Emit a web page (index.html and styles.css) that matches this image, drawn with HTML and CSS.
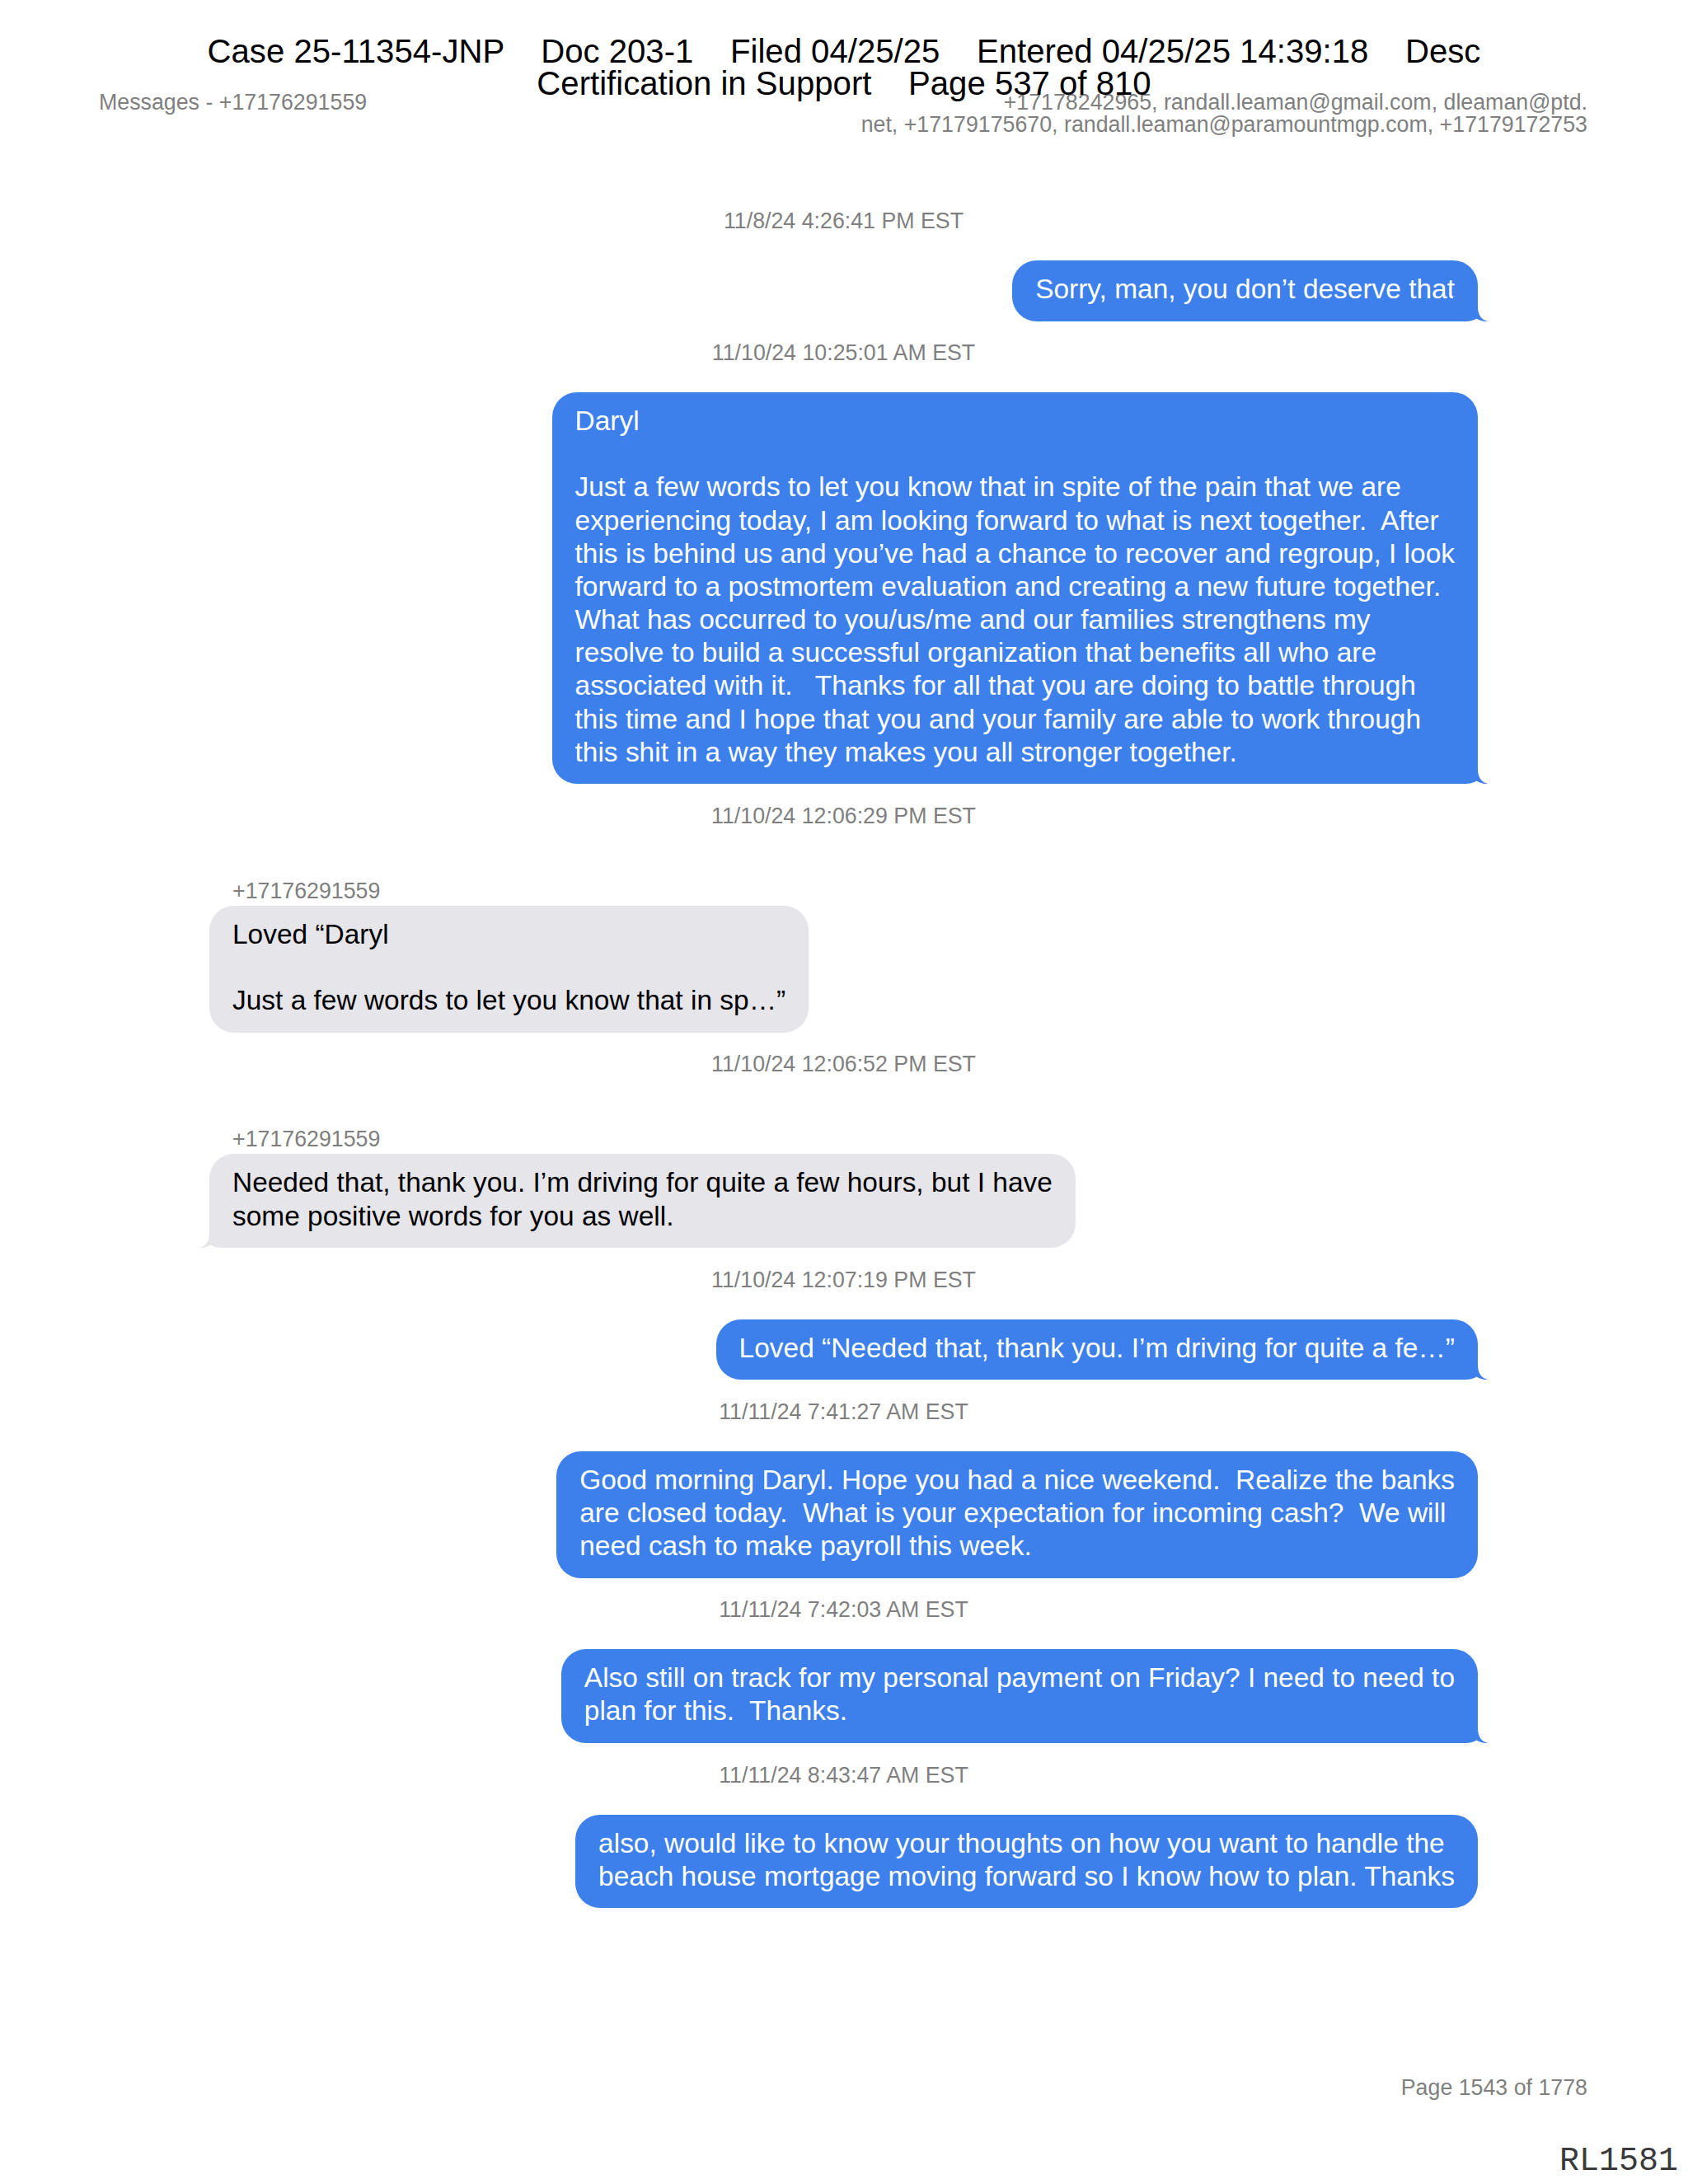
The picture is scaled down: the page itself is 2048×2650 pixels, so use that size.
FILE: index.html
```html
<!DOCTYPE html>
<html lang="en">
<head>
<meta charset="utf-8">
<title>Messages - +17176291559</title>
<link rel="stylesheet" href="styles.css">
</head>
<body>
<div class="page">
  <div class="stamp">Case 25-11354-JNP    Doc 203-1    Filed 04/25/25    Entered 04/25/25 14:39:18    Desc<br>Certification in Support    Page 537 of 810</div>

  <header class="doc-head">
    <div class="doc-title">Messages - +17176291559</div>
    <div class="doc-parts">+17178242965, randall.leaman@gmail.com, dleaman@ptd.<br>net, +17179175670, randall.leaman@paramountmgp.com, +17179172753</div>
  </header>

  <main class="thread">
    <div class="ts">11/8/24 4:26:41 PM EST</div>
    <div class="bubble out">Sorry, man, you don’t deserve that<svg class="tail" viewBox="0 0 42 34"><path d="M0,4 H30 V16 C30,26 34,32 42,34 C37,34.4 32,33 28.5,30.5 C25,33 20,34 14,34 H0 Z"/></svg></div>

    <div class="ts">11/10/24 10:25:01 AM EST</div>
    <div class="bubble out">Daryl<br><br>Just a few words to let you know that in spite of the pain that we are<br>experiencing today, I am looking forward to what is next together.  After<br>this is behind us and you’ve had a chance to recover and regroup, I look<br>forward to a postmortem evaluation and creating a new future together.<br>What has occurred to you/us/me and our families strengthens my<br>resolve to build a successful organization that benefits all who are<br>associated with it.   Thanks for all that you are doing to battle through<br>this time and I hope that you and your family are able to work through<br>this shit in a way they makes you all stronger together.<svg class="tail" viewBox="0 0 42 34"><path d="M0,4 H30 V16 C30,26 34,32 42,34 C37,34.4 32,33 28.5,30.5 C25,33 20,34 14,34 H0 Z"/></svg></div>

    <div class="ts">11/10/24 12:06:29 PM EST</div>
    <div class="sender">+17176291559</div>
    <div class="bubble in">Loved “Daryl<br><br>Just a few words to let you know that in sp…”</div>

    <div class="ts">11/10/24 12:06:52 PM EST</div>
    <div class="sender">+17176291559</div>
    <div class="bubble in">Needed that, thank you. I’m driving for quite a few hours, but I have<br>some positive words for you as well.<svg class="tail" viewBox="0 0 42 34"><path d="M0,4 H30 V16 C30,26 34,32 42,34 C37,34.4 32,33 28.5,30.5 C25,33 20,34 14,34 H0 Z"/></svg></div>

    <div class="ts">11/10/24 12:07:19 PM EST</div>
    <div class="bubble out">Loved “Needed that, thank you. I’m driving for quite a fe…”<svg class="tail" viewBox="0 0 42 34"><path d="M0,4 H30 V16 C30,26 34,32 42,34 C37,34.4 32,33 28.5,30.5 C25,33 20,34 14,34 H0 Z"/></svg></div>

    <div class="ts">11/11/24 7:41:27 AM EST</div>
    <div class="bubble out">Good morning Daryl. Hope you had a nice weekend.  Realize the banks<br>are closed today.  What is your expectation for incoming cash?  We will<br>need cash to make payroll this week.</div>

    <div class="ts">11/11/24 7:42:03 AM EST</div>
    <div class="bubble out">Also still on track for my personal payment on Friday? I need to need to<br>plan for this.  Thanks.<svg class="tail" viewBox="0 0 42 34"><path d="M0,4 H30 V16 C30,26 34,32 42,34 C37,34.4 32,33 28.5,30.5 C25,33 20,34 14,34 H0 Z"/></svg></div>

    <div class="ts">11/11/24 8:43:47 AM EST</div>
    <div class="bubble out">also, would like to know your thoughts on how you want to handle the<br>beach house mortgage moving forward so I know how to plan. Thanks</div>
  </main>

  <footer class="doc-foot">
    <div class="page-no">Page 1543 of 1778</div>
    <div class="bates">RL1581</div>
  </footer>
</div>
</body>
</html>
```

FILE: styles.css
```css
html, body {
  margin: 0;
  padding: 0;
  background: #ffffff;
}

body {
  font-family: "Liberation Sans", Arial, sans-serif;
}

.page {
  position: relative;
  width: 2048px;
  min-height: 2650px;
  box-sizing: border-box;
  padding: 111px 0 7px;
  display: flex;
  flex-direction: column;
}

/* court filing stamp laid over the page */
.stamp {
  position: absolute;
  top: 42.5px;
  left: 0;
  right: 0;
  text-align: center;
  font-size: 40.15px;
  line-height: 39.5px;
  color: #000000;
  white-space: pre;
}

.doc-head {
  display: flex;
  justify-content: space-between;
  align-items: flex-start;
  padding: 0 122px 0 120px;
  font-size: 26.77px;
  line-height: 27px;
  color: #7f7f7f;
}

.doc-parts {
  text-align: right;
}

.thread {
  display: flex;
  flex-direction: column;
  margin-top: 90px;
  padding: 0 255px 0 254px;
}

.ts {
  align-self: center;
  font-size: 26.77px;
  line-height: 27px;
  color: #7f7f7f;
  white-space: pre;
  margin: 25.5px 0 34px;
}

.ts:first-child {
  margin-top: 0;
}

.sender {
  align-self: flex-start;
  font-size: 26.77px;
  line-height: 27px;
  color: #7f7f7f;
  margin: 30px 0 4px 28px;
}

.bubble {
  position: relative;
  font-size: 33.46px;
  line-height: 40.15px;
  padding: 15px 28px 18.5px;
  border-radius: 30px;
  white-space: pre;
}

.out {
  align-self: flex-end;
  background: #3d80ec;
  color: #ffffff;
}

.in {
  align-self: flex-start;
  background: #e5e5ea;
  color: #000000;
}

.tail {
  position: absolute;
  bottom: 0;
  width: 42px;
  height: 34px;
  display: block;
}

.out .tail {
  right: -12px;
  fill: #3d80ec;
}

.in .tail {
  left: -12px;
  fill: #e5e5ea;
  transform: scaleX(-1);
}

.doc-foot {
  margin-top: auto;
  display: flex;
  flex-direction: column;
  align-items: flex-end;
}

.page-no {
  font-size: 26.77px;
  line-height: 27px;
  color: #7f7f7f;
  margin-right: 122px;
}

.bates {
  font-family: "Liberation Mono", "Courier New", monospace;
  font-size: 40px;
  line-height: 40px;
  color: #3a3a3a;
  margin-top: 56px;
  margin-right: 12px;
}
```
